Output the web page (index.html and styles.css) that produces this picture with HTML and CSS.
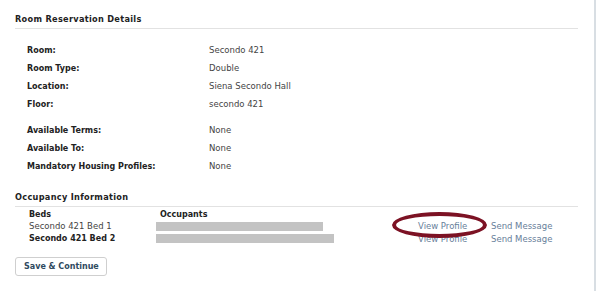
FILE: index.html
```html
<!DOCTYPE html>
<html>
  <head>
    <title>Room Reservation Details</title>
    <link rel="stylesheet" href="styles.css">
  </head>
  <body>
    <div class="page">
      <h2 class="section-title">Room Reservation Details</h2>
      <table class="details">
        <tr><th>Room:</th><td>Secondo 421</td></tr>
        <tr><th>Room Type:</th><td>Double</td></tr>
        <tr><th>Location:</th><td>Siena Secondo Hall</td></tr>
        <tr><th>Floor:</th><td>secondo 421</td></tr>
        <tr class="gap"><th>Available Terms:</th><td>None</td></tr>
        <tr><th>Available To:</th><td>None</td></tr>
        <tr><th>Mandatory Housing Profiles:</th><td>None</td></tr>
      </table>

      <h2 class="section-title occupancy-title">Occupancy Information</h2>
      <table class="occupancy">
        <tr class="head"><th class="bed">Beds</th><th>Occupants</th><th></th><th></th></tr>
        <tr>
          <td class="bed">Secondo 421 Bed 1</td>
          <td><span class="redacted" style="width:167px"></span></td>
          <td class="link-cell"><a href="#" class="profile-link">View Profile<span class="circle"></span></a></td>
          <td><a href="#">Send Message</a></td>
        </tr>
        <tr>
          <td class="bed current">Secondo 421 Bed 2</td>
          <td><span class="redacted" style="width:178px"></span></td>
          <td class="link-cell"><a href="#">View Profile</a></td>
          <td><a href="#">Send Message</a></td>
        </tr>
      </table>

      <button class="save-btn">Save &amp; Continue</button>
    </div>
  </body>
</html>
```

FILE: styles.css
```css
/* Basic page styles */
html, body {
  margin: 0;
  background: #fff;
}
body {
  font-family: "DejaVu Sans", Verdana, sans-serif;
  font-size: 8.5px;
  color: #333;
  border-right: 2px solid #d8dee3;
  min-height: 291px;
  box-sizing: border-box;
}
.page {
  padding: 14px 16px 0 15px;
}
.section-title {
  font-size: 8.2px;
  font-weight: bold;
  letter-spacing: 0.3px;
  color: #222;
  margin: 0;
  padding-bottom: 4px;
  border-bottom: 1px solid #e2e2e2;
}
.details {
  border-collapse: collapse;
  margin: 12px 0 0 12px;
}
.details th {
  text-align: left;
  font-weight: bold;
  font-size: 8px;
  color: #222;
  width: 182px;
  padding: 0;
  height: 18px;
}
.details td {
  padding: 0;
  color: #444;
}
.details tr.gap th,
.details tr.gap td {
  padding-top: 8px;
}
.occupancy-title {
  margin-top: 17px;
}
.occupancy {
  border-collapse: collapse;
  margin: 2px 0 0 14px;
}
.occupancy th {
  text-align: left;
  font-weight: bold;
  font-size: 8px;
  color: #222;
  padding: 0;
  height: 11px;
}
.occupancy td {
  padding: 0;
  height: 12.5px;
  color: #444;
}
.occupancy .bed {
  width: 131px;
}
.occupancy .current {
  font-weight: bold;
  font-size: 8px;
  color: #222;
}
.redacted {
  display: block;
  height: 9px;
  background: #c3c3c3;
  margin-left: -4px;
}
.link-cell {
  width: 73px;
}
.occupancy td:nth-child(2) {
  width: 258px;
}
.occupancy a {
  color: #67809a;
  text-decoration: none;
}
.profile-link {
  position: relative;
}
.circle {
  position: absolute;
  left: -26px;
  top: -9px;
  width: 87px;
  height: 18px;
  border: 4px solid #7c1224;
  border-radius: 50%;
}
.save-btn {
  margin-top: 12px;
  font-family: inherit;
  font-size: 8px;
  font-weight: bold;
  white-space: nowrap;
  color: #2f4a60;
  background: #fff;
  border: 1px solid #cfcfcf;
  border-radius: 3px;
  padding: 0 8px;
  height: 19px;
  width: 92px;
}
```
